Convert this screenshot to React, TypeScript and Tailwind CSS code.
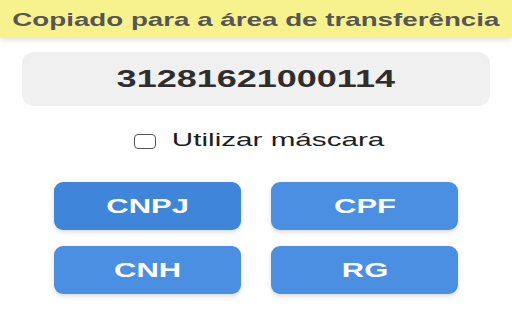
import React from "react";

const BUTTONS = [
  { label: "CNPJ", active: true },
  { label: "CPF", active: false },
  { label: "CNH", active: false },
  { label: "RG", active: false },
];

export default function App() {
  return (
    <div className="w-[512px] h-[320px] bg-white overflow-hidden font-['Liberation_Sans',Arial,sans-serif]">
      <div className="h-[38px] bg-[#f8f28e] shadow-[0_2px_6px_rgba(0,0,0,0.12)] flex items-center justify-center">
        <span className="inline-block scale-x-[1.46] text-[19px] font-bold text-[#565656] leading-none">
          Copiado para a área de transferência
        </span>
      </div>

      <div className="mx-[22px] mt-[14px] h-[54px] rounded-xl bg-[#f0f0f0] flex items-center justify-center">
        <span className="inline-block scale-x-150 text-[24px] font-bold text-[#2e2e2e] leading-none">
          31281621000114
        </span>
      </div>

      <label className="mt-[26px] h-[18px] flex items-center justify-center gap-[16px] pl-[6px]">
        <input
          type="checkbox"
          className="appearance-none w-[22px] h-[15px] border-[1.5px] border-[#555] rounded-[4px] bg-white"
        />
        <span className="inline-block w-[213px] text-center">
          <span className="inline-block scale-x-[1.56] text-[19px] text-[#1e1e1e] leading-none">
            Utilizar máscara
          </span>
        </span>
      </label>

      <div className="mt-[32px] mx-auto w-[404px] grid grid-cols-2 gap-x-[30px] gap-y-[16px]">
        {BUTTONS.map((b) => (
          <button
            key={b.label}
            className={`h-[48px] rounded-[9px] shadow-[0_2px_5px_rgba(0,0,0,0.15)] flex items-center justify-center ${
              b.active ? "bg-[#3f86db]" : "bg-[#4a8fe1]"
            }`}
          >
            <span className="inline-block scale-x-[1.55] text-[20px] font-bold text-white leading-none">
              {b.label}
            </span>
          </button>
        ))}
      </div>
    </div>
  );
}
